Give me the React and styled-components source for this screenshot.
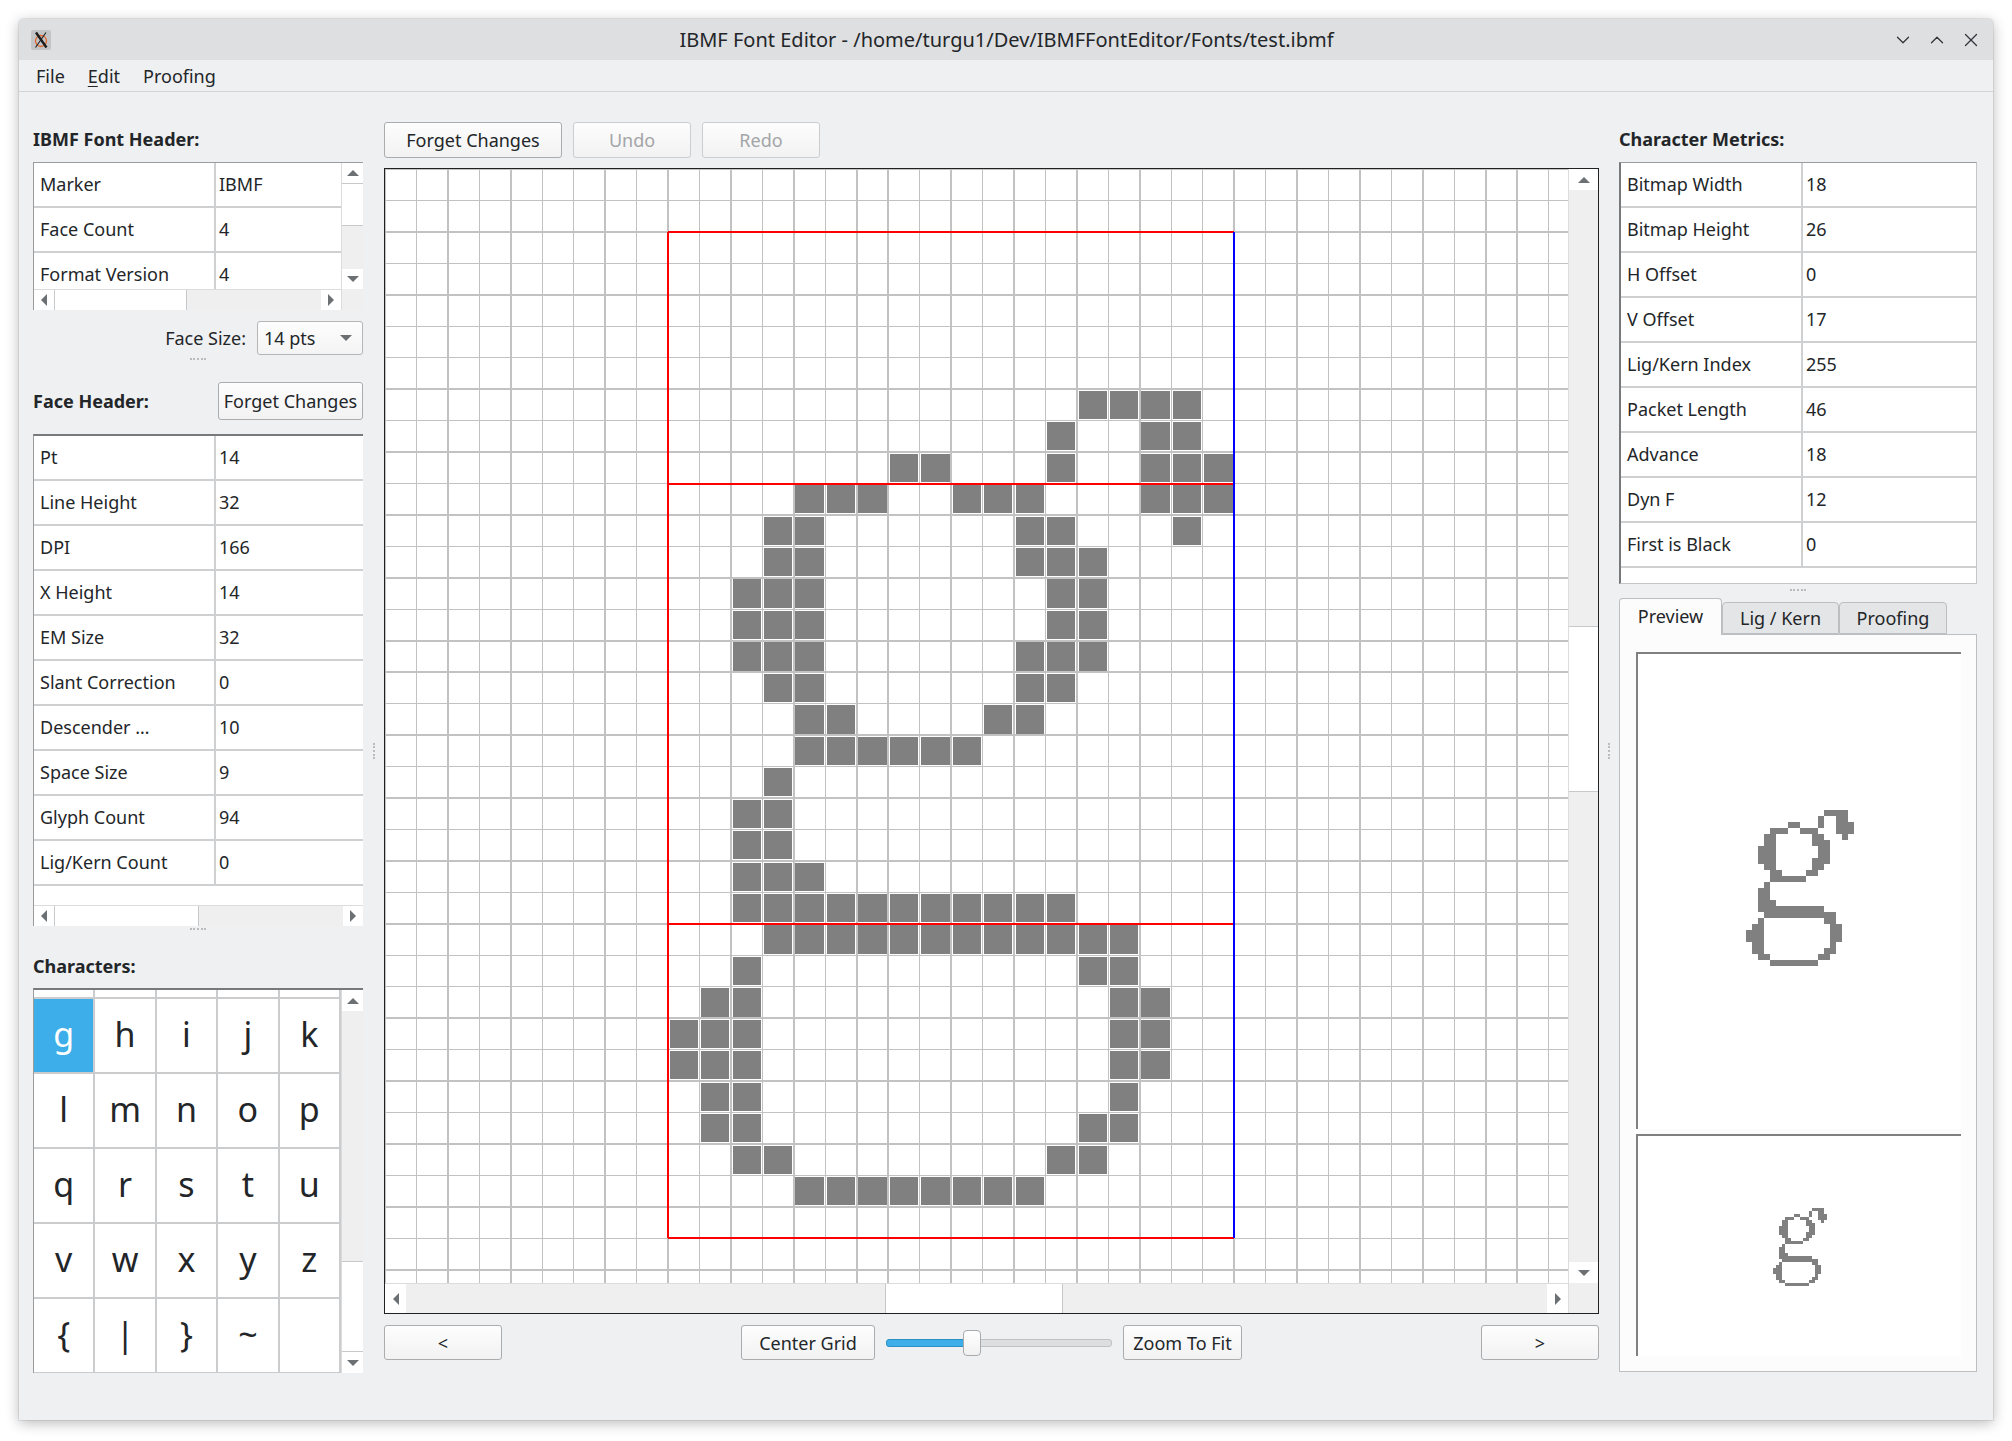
import React from "react";
import styled, { createGlobalStyle } from "styled-components";
import { ChevronDown, ChevronUp, X } from "lucide-react";

const GlobalStyle = createGlobalStyle`
  html, body {
    margin: 0;
    padding: 0;
    background: #ffffff;
  }
  body {
    font-family: "Noto Sans", "DejaVu Sans", sans-serif;
    font-size: 18px;
    color: #232629;
  }
  * {
    box-sizing: border-box;
  }
`;

// bitmap of the "g" glyph, one list of filled columns per row
const GLYPH = [
  [13, 14, 15, 16],
  [12, 15, 16],
  [7, 8, 12, 15, 16, 17],
  [4, 5, 6, 9, 10, 11, 15, 16, 17],
  [3, 4, 11, 12, 16],
  [3, 4, 11, 12, 13],
  [2, 3, 4, 12, 13],
  [2, 3, 4, 12, 13],
  [2, 3, 4, 11, 12, 13],
  [3, 4, 11, 12],
  [4, 5, 10, 11],
  [4, 5, 6, 7, 8, 9],
  [3],
  [2, 3],
  [2, 3],
  [2, 3, 4],
  [2, 3, 4, 5, 6, 7, 8, 9, 10, 11, 12],
  [3, 4, 5, 6, 7, 8, 9, 10, 11, 12, 13, 14],
  [2, 13, 14],
  [1, 2, 14, 15],
  [0, 1, 2, 14, 15],
  [0, 1, 2, 14, 15],
  [1, 2, 14],
  [1, 2, 13, 14],
  [2, 3, 12, 13],
  [4, 5, 6, 7, 8, 9, 10, 11],
];

const fontHeader = [
  ["Marker", "IBMF"],
  ["Face Count", "4"],
  ["Format Version", "4"],
];

const faceHeader = [
  ["Pt", "14"],
  ["Line Height", "32"],
  ["DPI", "166"],
  ["X Height", "14"],
  ["EM Size", "32"],
  ["Slant Correction", "0"],
  ["Descender …", "10"],
  ["Space Size", "9"],
  ["Glyph Count", "94"],
  ["Lig/Kern Count", "0"],
];

const metrics = [
  ["Bitmap Width", "18"],
  ["Bitmap Height", "26"],
  ["H Offset", "0"],
  ["V Offset", "17"],
  ["Lig/Kern Index", "255"],
  ["Packet Length", "46"],
  ["Advance", "18"],
  ["Dyn F", "12"],
  ["First is Black", "0"],
];

// the row above "g" is scrolled almost out of view: only its empty bottom strip shows
const charRows = [
  ["g", "h", "i", "j", "k"],
  ["l", "m", "n", "o", "p"],
  ["q", "r", "s", "t", "u"],
  ["v", "w", "x", "y", "z"],
  ["{", "|", "}", "~", ""],
];

const Desktop = styled.div`
  width: 2012px;
  height: 1441px;
  padding: 19px 19px 21px 19px;
`;

const Window = styled.div`
  width: 1974px;
  height: 1401px;
  display: flex;
  flex-direction: column;
  background: #eff0f1;
  border-radius: 4px 4px 0 0;
  box-shadow: 0 3px 14px rgba(0, 0, 0, 0.28), 0 0 0 1px rgba(0, 0, 0, 0.07);
  overflow: hidden;
`;

const TitleBar = styled.div`
  flex: none;
  height: 41px;
  display: grid;
  grid-template-columns: 1fr auto 1fr;
  align-items: center;
  padding: 0 11px 0 12px;
  background: #dedfe1;
`;

const TitleText = styled.div`
  font-size: 20px;
  white-space: nowrap;
  color: #232629;
`;

const WinButtons = styled.div`
  display: flex;
  justify-content: flex-end;
  align-items: center;
  gap: 12px;
  color: #31363b;
`;

const MenuBar = styled.div`
  flex: none;
  height: 32px;
  display: flex;
  align-items: center;
  gap: 23px;
  padding-left: 17px;
  border-bottom: 1px solid #d3d4d6;
`;

const MenuItem = styled.span`
  color: #232629;

  u {
    text-decoration-thickness: 1px;
    text-underline-offset: 3px;
  }
`;

const Content = styled.div`
  flex: 1;
  display: flex;
  padding: 30px 16px 0 14px;
`;

const Column = styled.div`
  flex: none;
  width: ${(p) => p.$width}px;
  display: flex;
  flex-direction: column;
`;

const Splitter = styled.div`
  flex: none;
  width: ${(p) => p.$width}px;
  display: flex;
  align-items: center;
  justify-content: center;
  padding-bottom: 40px;
`;

const VGrip = styled.div`
  width: 0;
  height: 16px;
  border-left: 2px dotted #b9bbbd;
`;

const GripRow = styled.div`
  flex: none;
  height: ${(p) => p.$height}px;
  display: flex;
  justify-content: center;
  padding-top: ${(p) => p.$offset}px;
`;

const HGrip = styled.div`
  width: 16px;
  height: 0;
  border-top: 2px dotted #b9bbbd;
`;

const SectionTitle = styled.div`
  flex: none;
  height: 34px;
  line-height: 34px;
  margin-bottom: ${(p) => p.$gap ?? 6}px;
  font-weight: 700;
  white-space: nowrap;
`;

const TableFrame = styled.div`
  flex: none;
  height: ${(p) => p.$height}px;
  display: grid;
  grid-template-columns: ${(p) => (p.$vscroll ? "1fr 22px" : "1fr")};
  grid-template-rows: ${(p) => (p.$hscroll ? "1fr 21px" : "1fr")};
  background: #ffffff;
  border-top: ${(p) => (p.$accent === "top" ? "2px solid #77797b" : "1px solid #9a9c9e")};
  border-left: ${(p) => (p.$accent === "left" ? "2px solid #77797b" : "1px solid #9a9c9e")};
  border-right: ${(p) => (p.$closed ? "1px solid #c4c6c8" : "none")};
  border-bottom: ${(p) => (p.$closed ? "1px solid #c4c6c8" : "none")};
  overflow: hidden;
`;

const Rows = styled.div`
  overflow: hidden;
  min-width: 0;
`;

const Row = styled.div`
  display: grid;
  grid-template-columns: 180px 1fr;
  height: 45px;
  border-bottom: 2px solid #cfd0d1;
`;

const Cell = styled.div`
  padding-left: 6px;
  line-height: 43px;
  white-space: nowrap;
  overflow: hidden;

  & + & {
    border-left: 2px solid #cfd0d1;
    padding-left: 3px;
  }
`;

const Corner = styled.div`
  background: #efefef;
  border-left: 1px solid #dcdcdc;
`;

const ScrollTrack = styled.div`
  display: flex;
  flex-direction: ${(p) => (p.$vertical ? "column" : "row")};
  background: #ffffff;
  min-width: 0;
  min-height: 0;
  ${(p) =>
    p.$vertical ? "border-left: 1px solid #dcdcdc;" : "border-top: 1px solid #dcdcdc;"}
`;

const ArrowBox = styled.div`
  flex: 0 0 ${(p) => p.$size}px;
  display: flex;
  align-items: center;
  justify-content: center;
  background: #ffffff;
`;

const Groove = styled.div`
  flex: ${(p) => (p.$size === undefined ? "1 1 0" : `0 0 ${p.$size}px`)};
  background: #efefef;
`;

const Handle = styled.div`
  flex: 0 0 ${(p) => p.$size}px;
  background: #ffffff;
  ${(p) =>
    p.$vertical
      ? "border-top: 1px solid #c6c8ca; border-bottom: 1px solid #c6c8ca;"
      : "border-left: 1px solid #c6c8ca; border-right: 1px solid #c6c8ca;"}
`;

function Arrow({ dir }) {
  const pts = {
    up: "0,7 6,1 12,7",
    down: "0,1 6,7 12,1",
    left: "7,0 1,6 7,12",
    right: "1,0 7,6 1,12",
  }[dir];
  const vertical = dir === "up" || dir === "down";
  return (
    <svg width={vertical ? 12 : 8} height={vertical ? 8 : 12}>
      <polygon points={pts} fill="#6d7073" />
    </svg>
  );
}

function ScrollBar({ vertical, arrow = 20, before, handle, after }) {
  return (
    <ScrollTrack $vertical={vertical}>
      <ArrowBox $size={arrow}>
        <Arrow dir={vertical ? "up" : "left"} />
      </ArrowBox>
      {before !== 0 && <Groove $size={before} />}
      <Handle $vertical={vertical} $size={handle} />
      {after !== 0 && <Groove $size={after} />}
      <ArrowBox $size={arrow}>
        <Arrow dir={vertical ? "down" : "right"} />
      </ArrowBox>
    </ScrollTrack>
  );
}

function PropRows({ data }) {
  return (
    <Rows>
      {data.map(([k, v]) => (
        <Row key={k}>
          <Cell>{k}</Cell>
          <Cell>{v}</Cell>
        </Row>
      ))}
    </Rows>
  );
}

const FaceSizeRow = styled.div`
  flex: none;
  height: 34px;
  margin-top: 11px;
  display: flex;
  justify-content: flex-end;
  align-items: center;
  gap: 11px;
`;

const Combo = styled.div`
  width: 106px;
  height: 34px;
  display: flex;
  align-items: center;
  justify-content: space-between;
  padding: 0 10px 0 6px;
  background: linear-gradient(#fdfdfd, #f4f4f5);
  border: 1px solid #b4b6b8;
  border-radius: 3px;
`;

const HeaderRow = styled.div`
  flex: none;
  height: 38px;
  margin-bottom: 14px;
  display: flex;
  justify-content: space-between;
  align-items: center;
`;

const Button = styled.button`
  flex: none;
  font-family: inherit;
  font-size: 18px;
  height: ${(p) => p.$h ?? 36}px;
  width: ${(p) => (p.$w ? `${p.$w}px` : "auto")};
  padding: 0 ${(p) => p.$pad ?? 10}px;
  color: ${(p) => (p.disabled ? "#a3a5a7" : "#232629")};
  background: linear-gradient(#fdfdfd, #f2f2f3);
  border: 1px solid ${(p) => (p.disabled ? "#cbcdcf" : "#aaacae")};
  border-radius: 3px;
  white-space: nowrap;
`;

const CharFrame = styled.div`
  flex: none;
  height: 385px;
  display: grid;
  grid-template-columns: 1fr 22px;
  background: #ffffff;
  border-top: 2px solid #77797b;
  border-left: 1px solid #9a9c9e;
  overflow: hidden;
`;

const CharViewport = styled.div`
  overflow: hidden;
  min-height: 0;
`;

const CharGrid = styled.div`
  display: grid;
  grid-template-columns: repeat(5, 1fr);
  grid-template-rows: 9px;
  grid-auto-rows: 75px;
`;

const CharCell = styled.div`
  display: flex;
  align-items: center;
  justify-content: center;
  font-size: 34px;
  padding-bottom: 4px;
  color: ${(p) => (p.$selected ? "#ffffff" : "#232629")};
  background: ${(p) => (p.$selected ? "#3daee9" : "#ffffff")};
  border-right: 2px solid #cbcccd;
  border-bottom: 2px solid #cbcccd;
`;

const Toolbar = styled.div`
  flex: none;
  height: 36px;
  display: flex;
  gap: 11px;
`;

const CanvasFrame = styled.div`
  flex: none;
  height: 1146px;
  margin-top: 10px;
  display: grid;
  grid-template-columns: 1fr 30px;
  grid-template-rows: 1fr 30px;
  background: #ffffff;
  border: 1px solid #1f2123;
  overflow: hidden;
`;

const CanvasViewport = styled.div`
  overflow: hidden;
  min-width: 0;
  min-height: 0;
`;

const BottomRow = styled.div`
  flex: none;
  height: 35px;
  margin-top: 11px;
  display: flex;
  justify-content: space-between;
  align-items: center;
`;

const ZoomGroup = styled.div`
  display: flex;
  align-items: center;
  gap: 11px;
`;

const Slider = styled.div`
  width: 226px;
  height: 35px;
  display: flex;
  align-items: center;
`;

const SliderFill = styled.div`
  flex: 0 0 ${(p) => p.$width}px;
  height: 8px;
  background: #3daee9;
  border: 1px solid #2c8fc4;
  border-radius: 3px 0 0 3px;
`;

const SliderKnob = styled.div`
  position: relative;
  z-index: 1;
  flex: none;
  width: 18px;
  height: 26px;
  margin: 0 -9px;
  background: linear-gradient(#ffffff, #f1f1f2);
  border: 1px solid #a8aaac;
  border-radius: 4px;
`;

const SliderRest = styled.div`
  flex: 1;
  height: 8px;
  background: #dddedf;
  border: 1px solid #bfc1c3;
  border-radius: 0 3px 3px 0;
`;

const TabBar = styled.div`
  flex: none;
  height: 36px;
  display: flex;
  align-items: flex-end;
`;

const Tab = styled.div`
  flex: none;
  width: ${(p) => p.$w}px;
  height: ${(p) => (p.$active ? 37 : 32)}px;
  margin-bottom: ${(p) => (p.$active ? -1 : 0)}px;
  display: flex;
  align-items: center;
  justify-content: center;
  padding-bottom: ${(p) => (p.$active ? 2 : 0)}px;
  background: ${(p) => (p.$active ? "#fcfcfc" : "#e4e5e6")};
  border: 1px solid #bcbebf;
  border-bottom: ${(p) => (p.$active ? "none" : "1px solid #bcbebf")};
  border-radius: 4px 4px 0 0;
  position: relative;
  z-index: ${(p) => (p.$active ? 1 : 0)};
`;

const TabPane = styled.div`
  flex: none;
  height: 738px;
  display: flex;
  flex-direction: column;
  gap: 5px;
  padding: 17px 15px 15px 16px;
  background: #fcfcfc;
  border: 1px solid #bcbebf;
`;

const PreviewFrame = styled.div`
  flex: none;
  height: ${(p) => p.$height}px;
  display: flex;
  justify-content: center;
  align-items: flex-start;
  padding-top: ${(p) => p.$top}px;
  background: #ffffff;
  border-top: 2px solid #808080;
  border-left: 2px solid #808080;
`;

function GlyphBitmap({ size }) {
  return (
    <svg width={18 * size} height={26 * size} shapeRendering="crispEdges">
      {GLYPH.flatMap((cols, r) =>
        cols.map((c) => (
          <rect key={`${r}-${c}`} x={c * size} y={r * size} width={size} height={size} fill="#808080" />
        ))
      )}
    </svg>
  );
}

function EditorGrid() {
  const C = 31.45;
  const W = 1183;
  const H = 1114;
  const ox = 9;
  const oy = 2;
  const inset = 1.6;
  const left = ox * C;
  const right = (ox + 18) * C;
  const line = (row) => (oy + row) * C;
  return (
    <svg width={W} height={H} shapeRendering="crispEdges">
      <rect width={W} height={H} fill="#ffffff" />
      {Array.from({ length: 38 }, (_, i) => (
        <line key={`v${i}`} x1={i * C} y1={0} x2={i * C} y2={H} stroke="#c2c2c2" strokeWidth={1.5} />
      ))}
      {Array.from({ length: 36 }, (_, i) => (
        <line key={`h${i}`} x1={0} y1={i * C} x2={W} y2={i * C} stroke="#c2c2c2" strokeWidth={1.5} />
      ))}
      {GLYPH.flatMap((cols, r) =>
        cols.map((c) => (
          <rect
            key={`${r}-${c}`}
            x={(ox + c) * C + inset}
            y={(oy + 5 + r) * C + inset}
            width={C - inset * 2}
            height={C - inset * 2}
            fill="#808080"
          />
        ))
      )}
      {[0, 8, 22, 32].map((row) => (
        <line key={`r${row}`} x1={left} y1={line(row)} x2={right} y2={line(row)} stroke="#ff0000" strokeWidth={2} />
      ))}
      <line x1={left} y1={line(0)} x2={left} y2={line(32)} stroke="#ff0000" strokeWidth={2} />
      <line x1={right} y1={line(0)} x2={right} y2={line(32)} stroke="#0000ff" strokeWidth={2} />
    </svg>
  );
}

function AppIcon() {
  return (
    <svg width="20" height="20" viewBox="0 0 20 20">
      <rect width="20" height="20" rx="2" fill="#c3c4c6" />
      <circle cx="10" cy="11" r="5.5" fill="none" stroke="#e2672c" strokeWidth="1.3" />
      <path d="M5 2.5 L15.5 17.5" stroke="#1d1d1d" strokeWidth="2.4" />
      <path d="M15 2.5 L4.5 17.5" stroke="#1d1d1d" strokeWidth="1.1" />
    </svg>
  );
}

function App() {
  return (
    <Desktop>
      <GlobalStyle />
      <Window>
        <TitleBar>
          <AppIcon />
          <TitleText>IBMF Font Editor - /home/turgu1/Dev/IBMFFontEditor/Fonts/test.ibmf</TitleText>
          <WinButtons>
            <ChevronDown size={22} strokeWidth={1.4} />
            <ChevronUp size={22} strokeWidth={1.4} />
            <X size={22} strokeWidth={1.4} />
          </WinButtons>
        </TitleBar>

        <MenuBar>
          <MenuItem>File</MenuItem>
          <MenuItem>
            <u>E</u>dit
          </MenuItem>
          <MenuItem>Proofing</MenuItem>
        </MenuBar>

        <Content>
          <Column $width={330}>
            <SectionTitle>IBMF Font Header:</SectionTitle>
            <TableFrame $height={148} $vscroll $hscroll>
              <PropRows data={fontHeader} />
              <ScrollBar vertical before={0} handle={43} />
              <ScrollBar before={0} handle={133} />
              <Corner />
            </TableFrame>

            <FaceSizeRow>
              <span>Face Size:</span>
              <Combo>
                <span>14 pts</span>
                <Arrow dir="down" />
              </Combo>
            </FaceSizeRow>
            <GripRow $height={27} $offset={3}>
              <HGrip />
            </GripRow>

            <HeaderRow>
              <SectionTitle $gap={0}>Face Header:</SectionTitle>
              <Button $h={38} $w={145} $pad={4}>
                Forget Changes
              </Button>
            </HeaderRow>
            <TableFrame $height={492} $hscroll $accent="top">
              <PropRows data={faceHeader} />
              <ScrollBar before={0} handle={145} />
            </TableFrame>
            <GripRow $height={23} $offset={2}>
              <HGrip />
            </GripRow>

            <SectionTitle $gap={5}>Characters:</SectionTitle>
            <CharFrame>
              <CharViewport>
                <CharGrid>
                  {Array.from({ length: 5 }, (_, i) => (
                    <CharCell key={`top${i}`} />
                  ))}
                  {charRows.flat().map((ch, i) => (
                    <CharCell key={i} $selected={ch === "g"}>
                      {ch}
                    </CharCell>
                  ))}
                </CharGrid>
              </CharViewport>
              <ScrollBar vertical arrow={21} handle={91} after={0} />
            </CharFrame>
          </Column>

          <Splitter $width={21}>
            <VGrip />
          </Splitter>

          <Column $width={1215}>
            <Toolbar>
              <Button $w={178}>Forget Changes</Button>
              <Button $w={118} disabled>
                Undo
              </Button>
              <Button $w={118} disabled>
                Redo
              </Button>
            </Toolbar>
            <CanvasFrame>
              <CanvasViewport>
                <EditorGrid />
              </CanvasViewport>
              <ScrollBar vertical arrow={21} before={436} handle={166} />
              <ScrollBar arrow={21} before={479} handle={178} />
              <Corner />
            </CanvasFrame>
            <BottomRow>
              <Button $h={35} $w={118}>
                &lt;
              </Button>
              <ZoomGroup>
                <Button $h={35} $w={134}>
                  Center Grid
                </Button>
                <Slider>
                  <SliderFill $width={86} />
                  <SliderKnob />
                  <SliderRest />
                </Slider>
                <Button $h={35} $w={119} $pad={6}>
                  Zoom To Fit
                </Button>
              </ZoomGroup>
              <Button $h={35} $w={118}>
                &gt;
              </Button>
            </BottomRow>
          </Column>

          <Splitter $width={20}>
            <VGrip />
          </Splitter>

          <Column $width={358}>
            <SectionTitle>Character Metrics:</SectionTitle>
            <TableFrame $height={422} $accent="left" $closed>
              <PropRows data={metrics} />
            </TableFrame>
            <GripRow $height={14} $offset={5}>
              <HGrip />
            </GripRow>
            <TabBar>
              <Tab $w={103} $active>
                Preview
              </Tab>
              <Tab $w={117}>Lig / Kern</Tab>
              <Tab $w={108}>Proofing</Tab>
            </TabBar>
            <TabPane>
              <PreviewFrame $height={477} $top={156}>
                <GlyphBitmap size={6} />
              </PreviewFrame>
              <PreviewFrame $height={222} $top={72}>
                <GlyphBitmap size={3} />
              </PreviewFrame>
            </TabPane>
          </Column>
        </Content>
      </Window>
    </Desktop>
  );
}

export default App;
